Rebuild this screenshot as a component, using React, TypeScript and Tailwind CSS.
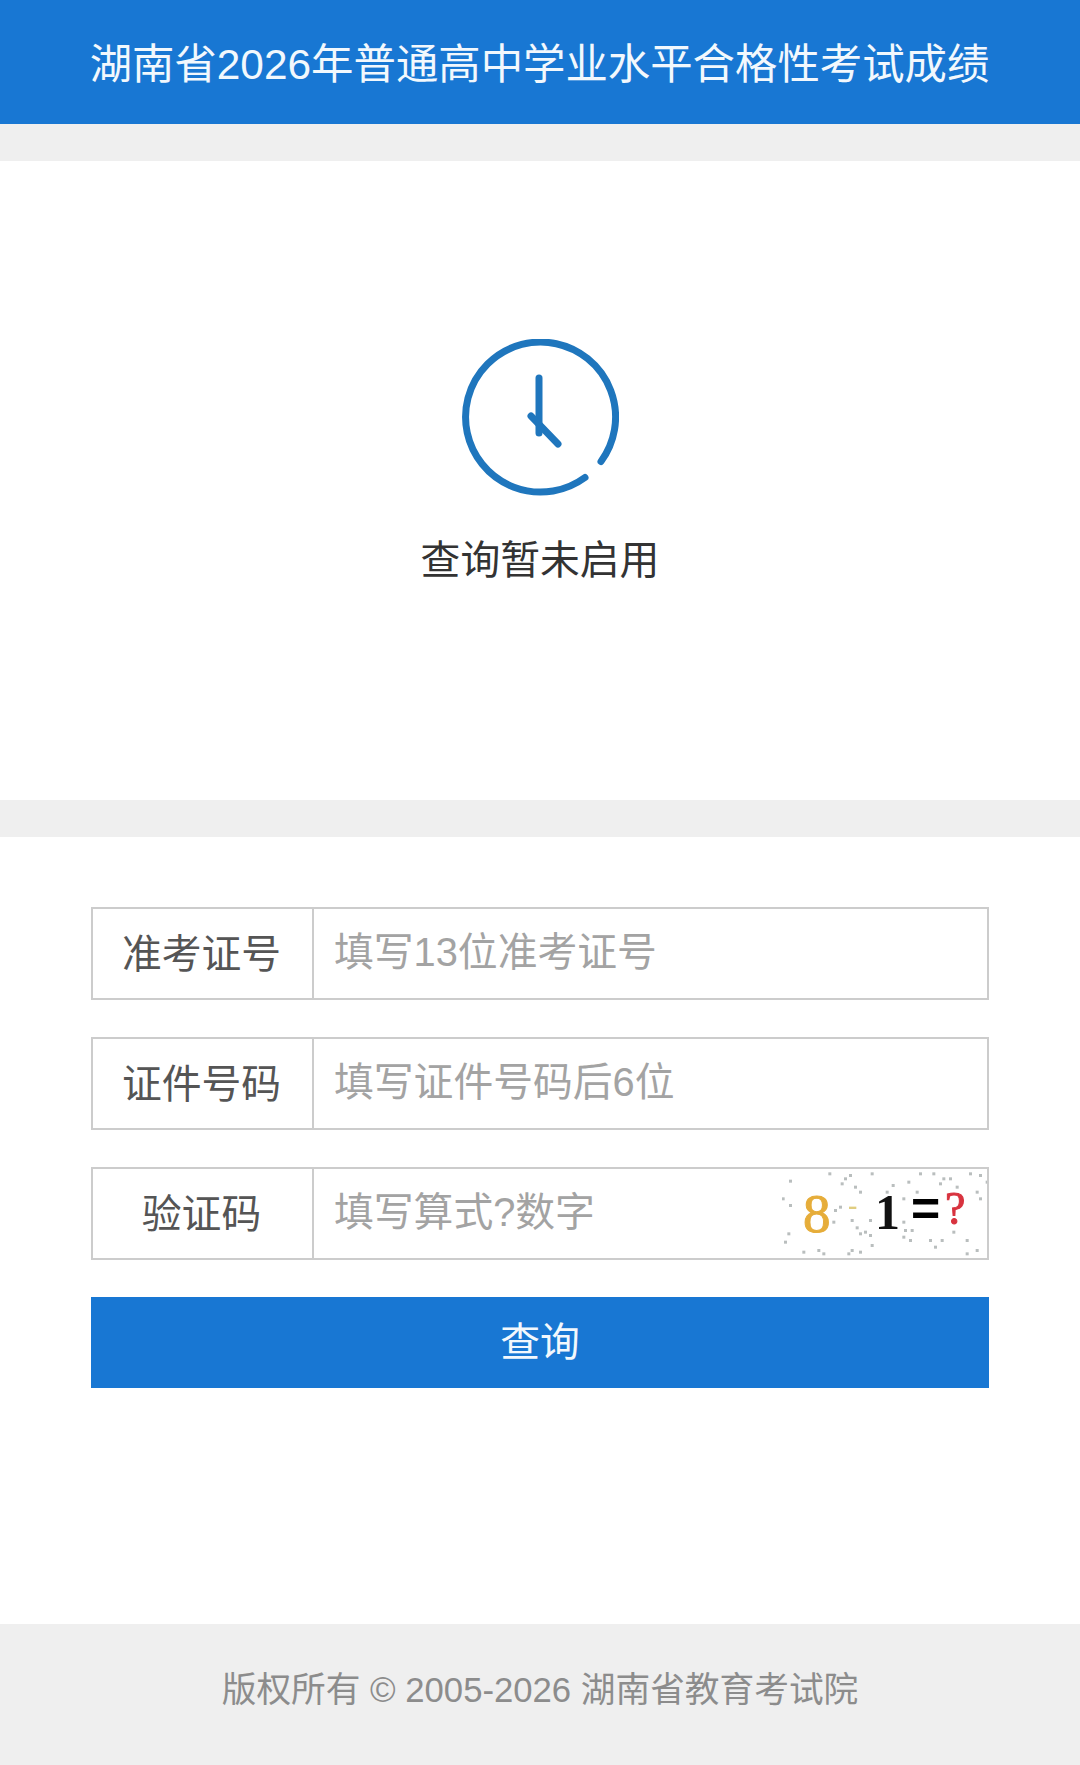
const font = "font-['Liberation_Sans','Noto_Sans_CJK_SC',sans-serif]";

// Noise specks of the captcha picture
const dots: [number, number][] = [
  [150, 92], [128, 145], [150, 165], [268, 70], [330, 75], [315, 85], [305, 100], [395, 70], [345, 110], [360, 125],
  [458, 105], [440, 125], [505, 95], [540, 70], [580, 70], [610, 85], [630, 85], [600, 100], [650, 110], [690, 70],
  [720, 75], [740, 95], [710, 125], [720, 145], [490, 145], [285, 180], [300, 170], [280, 215], [335, 210], [390, 210],
  [350, 232], [375, 245], [360, 250], [390, 255], [145, 250], [135, 275], [490, 215], [495, 240], [515, 240], [510, 270],
  [570, 270], [605, 270], [680, 270], [585, 290], [710, 300], [680, 310], [395, 285], [190, 305], [235, 300], [250, 310],
  [335, 300], [360, 305], [325, 310], [575, 195], [640, 245], [490, 260], [530, 125],
];

function Row({ label, placeholder, captcha }: { label: string; placeholder: string; captcha?: boolean }) {
  return (
    <div className="flex h-[93px] border-2 border-[#cccccc] bg-white">
      <div className="flex w-[221px] shrink-0 items-center justify-center border-r-2 border-[#cccccc] pt-[2px] pr-[2px] text-[39.8px] text-[#555555]">
        {label}
      </div>
      <input
        readOnly
        placeholder={placeholder}
        className="min-w-0 flex-1 bg-transparent pb-[2px] pl-[20px] text-[39.8px] text-[#555555] outline-none placeholder:text-[#a3a3a3]"
      />
      {captcha && <Captcha />}
    </div>
  );
}

function Captcha() {
  return (
    <div className="relative w-[205px] shrink-0 font-['Liberation_Serif',serif] leading-none">
      <svg width="205" height="89" className="absolute inset-0 blur-[0.6px]" aria-hidden="true">
        {dots.map(([x, y], i) => (
          <rect key={i} x={x / 3 - 43} y={y / 3 - 20} width="3" height="3" fill="#b9bebe" />
        ))}
      </svg>
      <span className="absolute top-[17px] left-[21px] text-[55px] text-[#e6ad3a] blur-[0.5px] [-webkit-text-stroke:1px_#e6ad3a]">8</span>
      <span className="absolute top-[22px] left-[66px] text-[28px] font-bold text-[#e0cd80] blur-[0.5px]">-</span>
      <span className="absolute top-[18px] left-[93px] text-[50px] font-bold text-[#111111] blur-[0.4px]">1</span>
      <span className="absolute top-[15px] left-[129px] font-['Liberation_Sans',sans-serif] text-[50px] font-bold text-[#000000] blur-[0.4px]">=</span>
      <span className="absolute top-[17px] left-[163px] text-[46px] text-[#d8333f] blur-[0.5px] [-webkit-text-stroke:1px_#d8333f]">?</span>
    </div>
  );
}

export default function App() {
  return (
    <div className={`flex min-h-[1765px] w-[1080px] flex-col bg-[#efefef] ${font}`}>
      <header className="flex h-[124px] items-center justify-center bg-[#1877d3] pt-[6px] pr-[1px] text-[42.4px] whitespace-nowrap text-[#f2f8fd]">
        湖南省2026年普通高中学业水平合格性考试成绩
      </header>

      <section className="mt-[37px] flex h-[639px] flex-col items-center bg-white pt-[178px]">
        <svg width="160" height="160" viewBox="0 0 160 160" fill="none" stroke="#1f76bd" strokeWidth="7" strokeLinecap="round" className="mr-[2px]">
          <path d="M 142 122.5 A 75 75 0 1 0 126 138.5" />
          <path d="M 80 39 V 94" />
          <path d="M 72 77 L 99 105" />
        </svg>
        <p className="mt-[32px] text-[39.8px] leading-[58px] text-[#333333]">查询暂未启用</p>
      </section>

      <section className="mt-[37px] flex h-[787px] flex-col bg-white px-[91px] pt-[70px]">
        <div className="flex flex-col gap-[37px]">
          <Row label="准考证号" placeholder="填写13位准考证号" />
          <Row label="证件号码" placeholder="填写证件号码后6位" />
          <Row label="验证码" placeholder="填写算式?数字" captcha />
          <button className="flex h-[91px] items-center justify-center bg-[#1877d3] text-[39.8px] text-[#f2f8fd]">
            查询
          </button>
        </div>
      </section>

      <footer className="flex h-[141px] items-center justify-center pb-[9px] text-[34.7px] text-[#8c8c8c]">
        版权所有 © 2005-2026 湖南省教育考试院
      </footer>
    </div>
  );
}
